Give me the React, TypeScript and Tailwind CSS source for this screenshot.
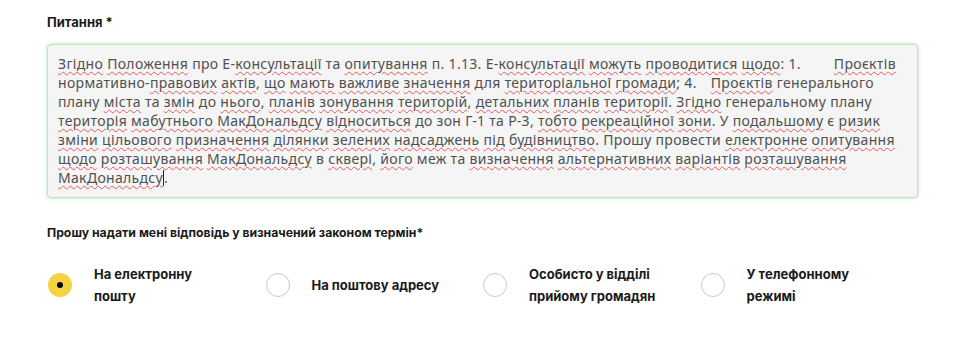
import React from "react";

const lines: string[] = [
  "~Згідно ~Положення про Е-~консультації та ~опитування п. 1.13. Е-~консультації ~можуть ~проводитися ~щодо: 1.{S35}~Проєктів",
  "нормативно-~правових ~актів, ~що ~мають ~важливе ~значення для ~територіальної ~громади; 4.{S16}~Проєктів генерального",
  "плану ~міста та ~змін до ~нього, ~планів ~зонування ~територій, ~детальних ~планів ~території. ~Згідно генеральному плану",
  "~територія ~мабутнього ~МакДональдсу ~відноситься до зон Г-1 та Р-3, ~тобто ~рекреаційної ~зони. У ~подальшому є ~ризик",
  "~зміни ~цільового ~призначення ~ділянки ~зелених ~надсаджень ~під ~будівництво. Прошу провести ~електронне ~опитування",
  "~щодо ~розташування ~МакДональдсу в ~сквері, ~його меж та ~визначення ~альтернативних ~варіантів ~розташування",
  "~МакДональдсу{CARET}.",
];

function renderLine(line: string, li: number) {
  const parts = line.split(/(~[^\s.,:;{]+|\{S\d+\}|\{CARET\})/);
  return parts.map((p, i) => {
    if (p.startsWith("~")) {
      return (
        <span
          key={i}
          className="underline decoration-wavy decoration-[#e8585c] decoration-[1px] underline-offset-[2px]"
        >
          {p.slice(1)}
        </span>
      );
    }
    if (p === "{S35}") return <span key={i} className="inline-block w-[33px]" />;
    if (p === "{S16}") return <span key={i} className="inline-block w-[14px]" />;
    if (p === "{CARET}")
      return <span key={i} className="inline-block w-px h-[16px] bg-[#222] align-[-3px]" />;
    return <React.Fragment key={li + "-" + i}>{p}</React.Fragment>;
  });
}

const options = [
  { label: ["На електронну", "пошту"], checked: true },
  { label: ["На поштову адресу"], checked: false },
  { label: ["Особисто у відділі", "прийому громадян"], checked: false },
  { label: ["У телефонному", "режимі"], checked: false },
];

export default function App() {
  return (
    <div
      className="w-[973px] h-[342px] bg-white pt-[14px] pl-[47px] pr-[55px] text-[#1a1a1a]"
      style={{ fontFamily: "Inter, 'Noto Sans', sans-serif" }}
    >
      <div className="text-[13px] leading-[16px] font-bold">Питання *</div>
      <div
        className="mt-[14px] w-[871px] h-[154px] rounded-[4px] border border-[#bfe3c0] bg-[#f5f5f5] shadow-[0_0_3px_1px_rgba(120,200,130,0.35)] px-[10px] py-[9px] text-[14px] tracking-[0.32px] leading-[19px] text-[#505050] whitespace-pre"
        style={{ fontFamily: "'Noto Sans', sans-serif" }}
      >
        {lines.map((l, i) => (
          <div key={i}>{renderLine(l, i)}</div>
        ))}
      </div>
      <div className="mt-[27px] text-[12.25px] leading-[16px] font-bold">
        Прошу надати мені відповідь у визначений законом термін*
      </div>
      <div className="mt-[22px] flex">
        {options.map((o, i) => (
          <div key={i} className="w-[217.5px] flex items-center">
            <div
              className={
                o.checked
                  ? "w-[24px] h-[24px] ml-px rounded-full bg-[#f6d343] flex items-center justify-center shrink-0"
                  : "w-[24px] h-[24px] ml-px rounded-full border border-[#c9c9c9] bg-white shrink-0"
              }
            >
              {o.checked && <div className="w-[6px] h-[6px] rounded-full bg-black" />}
            </div>
            <div className="ml-[22px] text-[13px] leading-[22px] font-bold">
              {o.label.map((t, j) => (
                <div key={j}>{t}</div>
              ))}
            </div>
          </div>
        ))}
      </div>
    </div>
  );
}
